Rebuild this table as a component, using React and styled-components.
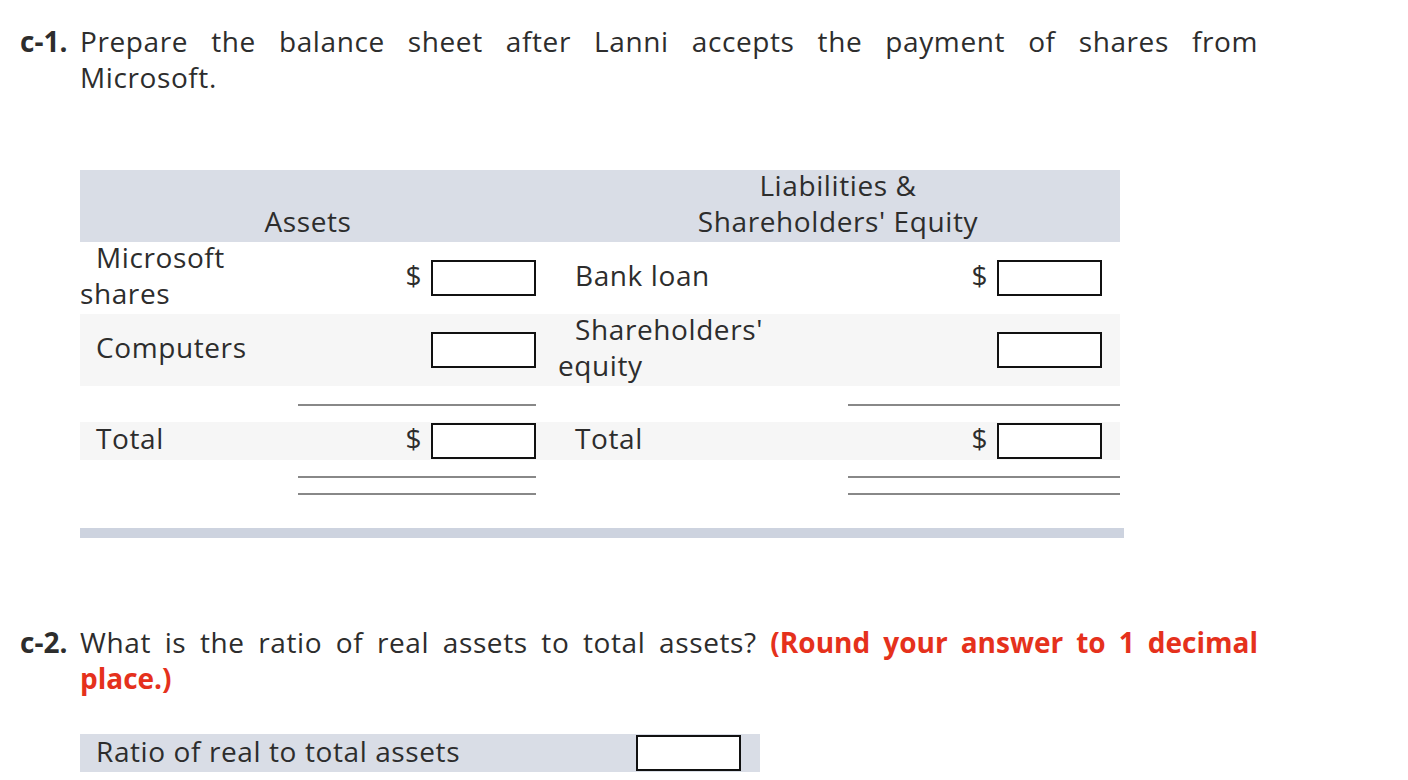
import styled, { createGlobalStyle } from 'styled-components';

const GlobalStyle = createGlobalStyle`
  body {
    margin: 0;
    background: #fff;
    font-family: 'Open Sans', Lato, sans-serif;
    color: #2d2d2d;
  }
`;

const COLS = '218px 238px 20px 292px 272px';

export default function App() {
  return (
    <>
      <GlobalStyle />
      <Page>
        <Question>
          <Tag>c-1.</Tag>
          <Prompt>
            <Line>Prepare the balance sheet after Lanni accepts the payment of shares from</Line>
            <Line last>Microsoft.</Line>
          </Prompt>
        </Question>

        <Sheet>
          <Row bg='#d9dde6' height={72} align='end'>
            <HeadCell span={2}>Assets</HeadCell>
            <div />
            <HeadCell span={2}>
              Liabilities &amp;
              <br />
              Shareholders' Equity
            </HeadCell>
          </Row>

          <Row height={72}>
            <Label>Microsoft shares</Label>
            <Amount>
              <Dollar>$</Dollar>
              <Box />
            </Amount>
            <div />
            <Label right>Bank loan</Label>
            <Amount right>
              <Dollar>$</Dollar>
              <Box />
            </Amount>
          </Row>

          <Row bg='#f6f6f6' height={72}>
            <Label>Computers</Label>
            <Amount>
              <Box />
            </Amount>
            <div />
            <Label right>Shareholders' equity</Label>
            <Amount right>
              <Box />
            </Amount>
          </Row>

          <Row height={36}>
            <div />
            <Rule />
            <div />
            <div />
            <Rule />
          </Row>

          <Row bg='#f6f6f6' height={38}>
            <Label>Total</Label>
            <Amount>
              <Dollar>$</Dollar>
              <Box />
            </Amount>
            <div />
            <Label right>Total</Label>
            <Amount right>
              <Dollar>$</Dollar>
              <Box />
            </Amount>
          </Row>

          <Row height={68} align='start'>
            <div />
            <DoubleRule />
            <div />
            <div />
            <DoubleRule />
          </Row>

          <BottomBar />
        </Sheet>

        <Question>
          <Tag>c-2.</Tag>
          <Prompt>
            <Line>
              What is the ratio of real assets to total assets? <Warn>(Round your answer to 1 decimal</Warn>
            </Line>
            <Line last>
              <Warn>place.)</Warn>
            </Line>
          </Prompt>
        </Question>

        <RatioRow>
          <RatioText>Ratio of real to total assets</RatioText>
          <Box />
        </RatioRow>
      </Page>
    </>
  );
}

const Page = styled.div`
  padding: 23px 0 0 20px;
  font-size: 28px;
  line-height: 36px;
  letter-spacing: 0.6px;
`;

const Question = styled.div`
  display: flex;
  width: 1238px;
`;

const Tag = styled.span`
  flex: 0 0 60px;
  font-weight: 700;
  letter-spacing: 0;
`;

const Prompt = styled.div`
  flex: 1;
`;

const Line = styled.div`
  text-align: ${({ last }) => (last ? 'left' : 'justify')};
  text-align-last: ${({ last }) => (last ? 'left' : 'justify')};
`;

const Warn = styled.span`
  color: #e5311c;
  font-weight: 700;
  letter-spacing: 0;
`;

const Sheet = styled.div`
  margin: 75px 0 86px 60px;
  width: 1044px;
`;

const Row = styled.div`
  display: grid;
  grid-template-columns: ${COLS};
  grid-template-rows: ${({ height }) => height}px;
  width: 1040px;
  height: ${({ height }) => height}px;
  align-items: ${({ align }) => align || 'center'};
  background: ${({ bg }) => bg || 'transparent'};
`;

const HeadCell = styled.div`
  grid-column: span ${({ span }) => span};
  text-align: center;
  padding-bottom: 3px;
`;

const Label = styled.div`
  padding-left: ${({ right }) => (right ? 2 : 0)}px;
  padding-bottom: 6px;
  text-indent: ${({ right }) => (right ? 17 : 16)}px;
`;

const Amount = styled.div`
  display: flex;
  align-items: center;
  justify-content: flex-end;
  gap: 9px;
  height: 36px;
  padding-right: ${({ right }) => (right ? 18 : 0)}px;
`;

const Dollar = styled.span`
  line-height: 30px;
  padding-bottom: 6px;
`;

const Box = styled.span`
  display: block;
  width: 105px;
  height: 36px;
  box-sizing: border-box;
  border: 2px solid #111;
  background: #fff;
`;

const Rule = styled.div`
  align-self: start;
  margin-top: 18px;
  border-top: 2px solid #888;
`;

const DoubleRule = styled.div`
  margin-top: 16px;
  height: 15px;
  border-top: 2px solid #888;
  border-bottom: 2px solid #888;
`;

const BottomBar = styled.div`
  height: 10px;
  background: #cdd3df;
`;

const RatioRow = styled.div`
  display: flex;
  align-items: center;
  justify-content: space-between;
  width: 680px;
  height: 38px;
  margin: 38px 0 0 60px;
  padding: 0 19px 0 16px;
  box-sizing: border-box;
  background: #d9dde6;
`;

const RatioText = styled.span`
  padding-bottom: 4px;
`;
